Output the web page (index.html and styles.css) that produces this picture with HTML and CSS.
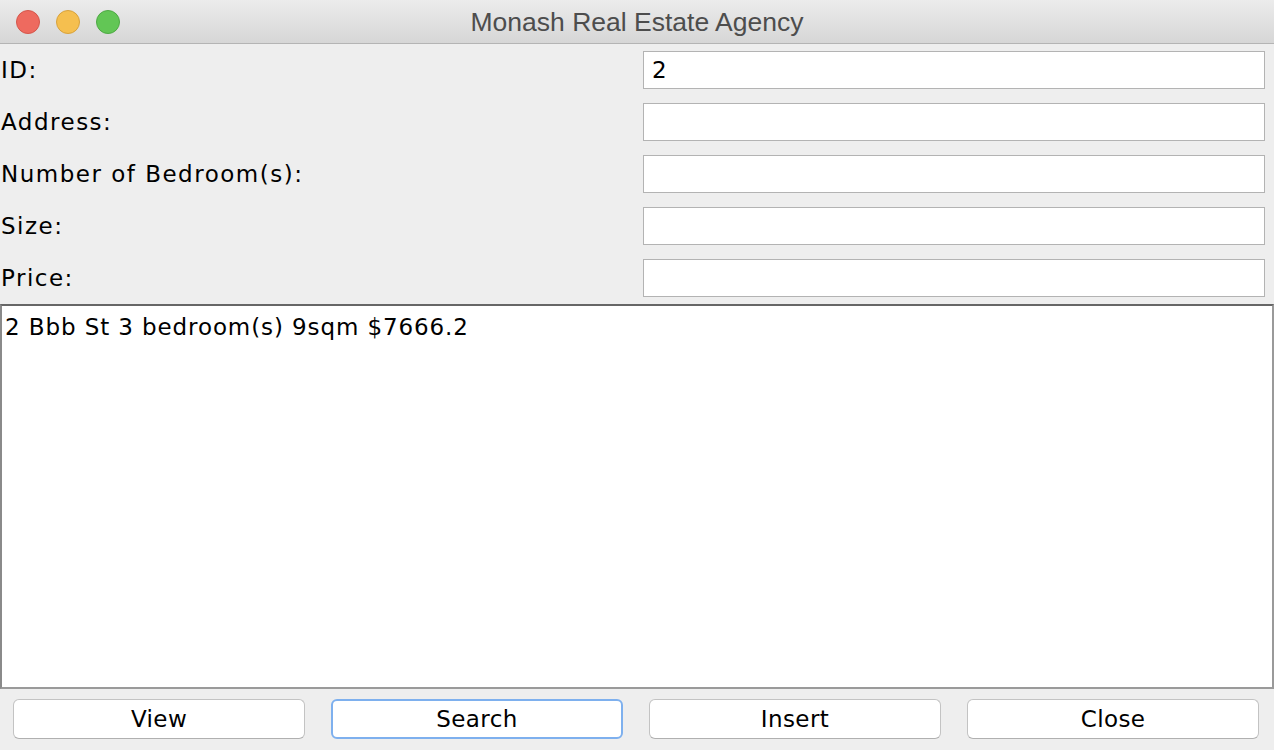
FILE: index.html
```html
<!DOCTYPE html>
<html>
<head>
<meta charset="utf-8">
<link rel="stylesheet" href="styles.css">
</head>
<body>
<div class="window">
  <div class="titlebar">
    <div class="lights">
      <span class="light red"></span>
      <span class="light yellow"></span>
      <span class="light green"></span>
    </div>
    <div class="title">Monash Real Estate Agency</div>
  </div>
  <div class="form">
    <label class="label">ID:</label>
    <div class="field">2</div>
    <label class="label">Address:</label>
    <div class="field"></div>
    <label class="label">Number of Bedroom(s):</label>
    <div class="field"></div>
    <label class="label">Size:</label>
    <div class="field"></div>
    <label class="label">Price:</label>
    <div class="field"></div>
  </div>
  <div class="output">2 Bbb St 3 bedroom(s) 9sqm $7666.2</div>
  <div class="buttons">
    <button class="btn">View</button>
    <button class="btn focused">Search</button>
    <button class="btn">Insert</button>
    <button class="btn">Close</button>
  </div>
</div>
</body>
</html>
```
FILE: styles.css
```css
html, body {
  margin: 0;
  padding: 0;
  width: 1274px;
  height: 750px;
  overflow: hidden;
  background: #eeeeee;
}
.window {
  display: flex;
  flex-direction: column;
  width: 1274px;
  height: 750px;
  font-family: "DejaVu Sans", sans-serif;
  color: #000;
}
.titlebar {
  position: relative;
  height: 43px;
  border-bottom: 1px solid #b4b4b4;
  background: linear-gradient(#ececec, #d6d6d6);
  display: flex;
  align-items: center;
  justify-content: center;
}
.lights {
  position: absolute;
  left: 16px;
  top: 10px;
  display: flex;
  gap: 16px;
}
.light {
  width: 24px;
  height: 24px;
  border-radius: 50%;
  box-sizing: border-box;
}
.red { background: #ee6a5f; border: 1px solid #d5564b; }
.yellow { background: #f5bf4f; border: 1px solid #d8a23c; }
.green { background: #62c655; border: 1px solid #4ea944; }
.title {
  font-family: "Liberation Sans", sans-serif;
  font-size: 26.5px;
  color: #4d4d4d;
  padding-top: 2px;
}
.form {
  display: grid;
  grid-template-columns: 643px 622px;
  row-gap: 14px;
  padding: 7px 0 0 0;
  align-items: center;
}
.label {
  font-size: 23px;
  letter-spacing: 1.5px;
  padding-left: 1px;
  line-height: 38px;
}
.field {
  height: 38px;
  box-sizing: border-box;
  border: 1px solid #b3b3b3;
  background: #fff;
  font-size: 23px;
  line-height: 36px;
  padding-left: 8px;
}
.output {
  margin-top: 7px;
  height: 385px;
  box-sizing: border-box;
  background: #fff;
  border-top: 2px solid #666;
  border-left: 2px solid #8a8a8a;
  border-right: 2px solid #9a9a9a;
  border-bottom: 2px solid #9a9a9a;
  font-size: 23px;
  letter-spacing: 0.9px;
  padding: 7px 0 0 3px;
  line-height: 28px;
}
.buttons {
  display: flex;
  gap: 26px;
  padding: 10px 0 0 13px;
}
.btn {
  width: 292px;
  height: 40px;
  box-sizing: border-box;
  background: #fff;
  border: 1px solid #c3c3c3;
  border-bottom-color: #b0b0b0;
  border-radius: 6px;
  font-family: "DejaVu Sans", sans-serif;
  font-size: 23px;
  letter-spacing: 0.4px;
  color: #000;
  padding: 0;
}
.btn.focused {
  border: 2px solid #7eb0ee;
}
```
